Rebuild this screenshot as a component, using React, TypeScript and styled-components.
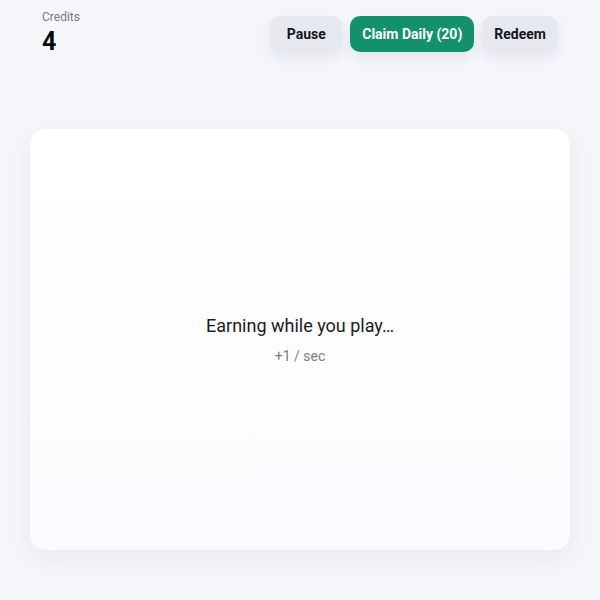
import React from 'react';
import styled, {createGlobalStyle} from 'styled-components';

const GlobalStyle = createGlobalStyle`
  html, body {
    margin: 0;
    padding: 0;
    background: #f5f6fa;
    font-family: Roboto, "Liberation Sans", sans-serif;
  }
`;

const Page = styled.div`
  width: 600px;
  height: 600px;
  box-sizing: border-box;
  padding: 10px 30px 50px;
  display: flex;
  flex-direction: column;
  gap: 71px;
`;

const Header = styled.div`
  display: flex;
  justify-content: space-between;
  align-items: flex-start;
  padding: 0 12px;
`;

const Stat = styled.div`
  display: flex;
  flex-direction: column;
`;

const StatLabel = styled.span`
  font-size: 12px;
  line-height: 14px;
  color: #777b84;
`;

const StatValue = styled.span`
  font-size: 25px;
  font-weight: 700;
  line-height: 32px;
  color: #0b0b0f;
  margin-top: 2px;
`;

const Actions = styled.div`
  display: flex;
  gap: 8px;
  padding-top: 6px;
`;

const ActionButton = styled.button<{$primary?: boolean}>`
  height: 36px;
  min-width: 72px;
  padding: 0 12px;
  border: none;
  border-radius: 10px;
  font-family: inherit;
  font-size: 14px;
  font-weight: 700;
  color: ${p => (p.$primary ? '#ffffff' : '#15161a')};
  background: ${p => (p.$primary ? '#12916c' : '#e6e8ef')};
  box-shadow: 0 6px 14px rgba(20, 30, 60, 0.07);
  cursor: pointer;
`;

const Card = styled.div`
  flex: 1;
  border-radius: 16px;
  background: linear-gradient(180deg, #ffffff 0%, #fafbfe 100%);
  box-shadow: 0 8px 24px rgba(20, 30, 60, 0.06);
  display: flex;
  flex-direction: column;
  align-items: center;
  justify-content: center;
  gap: 12px;
`;

const Message = styled.div`
  font-size: 18px;
  color: #1b1c20;
`;

const Rate = styled.div`
  font-size: 14px;
  color: #7a7d85;
`;

function App() {
  return (
    <>
      <GlobalStyle />
      <Page>
        <Header>
          <Stat>
            <StatLabel>Credits</StatLabel>
            <StatValue>4</StatValue>
          </Stat>
          <Actions>
            <ActionButton>Pause</ActionButton>
            <ActionButton $primary>Claim Daily (20)</ActionButton>
            <ActionButton>Redeem</ActionButton>
          </Actions>
        </Header>
        <Card>
          <Message>Earning while you play…</Message>
          <Rate>+1 / sec</Rate>
        </Card>
      </Page>
    </>
  );
}

export default App;
